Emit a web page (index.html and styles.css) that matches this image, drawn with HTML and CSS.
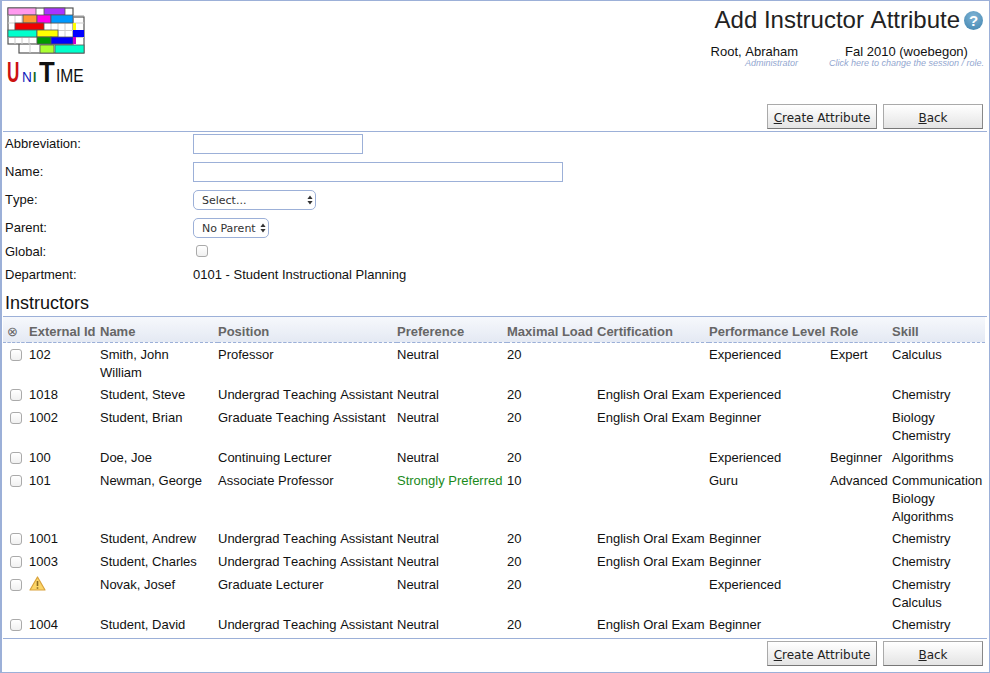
FILE: index.html
```html
<!DOCTYPE html>
<html lang="en">
<head>
    <meta charset="UTF-8">
    <title>Add Instructor Attribute</title>
    <link rel="stylesheet" href="styles.css">
</head>
<body>
    <div class="page">
        <div class="header">
            <div class="logo">
                <svg width="80" height="49" viewBox="0 -1 80 49">
                    <rect x="12" y="9" width="65" height="36" fill="#fff" stroke="#555" stroke-width="1.2"/>
                    <rect x="1" y="0" width="65" height="36" fill="#fff" stroke="#555" stroke-width="1.2"/>
                    <path d="M1 7.5H77M1 15H77M1 22.5H77M1 29.5H77M8 7V36M15 7V36M22 7V36M30 7V36M44 7V36M51 7V36M58 7V36M66 7V45M23 36V45M33 36V45" stroke="#ccc" stroke-width="1" fill="none"/>
                    <rect x="1" y="0" width="28" height="7" fill="#ff99ee" stroke="#555" stroke-width=".8"/>
                    <rect x="37" y="0" width="21" height="7" fill="#aa33ff" stroke="#555" stroke-width=".8"/>
                    <rect x="16" y="7" width="14" height="8" fill="#ff9933" stroke="#555" stroke-width=".8"/>
                    <rect x="30" y="7" width="14" height="8" fill="#ff00ee" stroke="#555" stroke-width=".8"/>
                    <rect x="44" y="7" width="22" height="8" fill="#0099ff" stroke="#555" stroke-width=".8"/>
                    <rect x="8" y="15" width="29" height="7" fill="#ee0000" stroke="#555" stroke-width=".8"/>
                    <rect x="66" y="15" width="3" height="7" fill="#ffff00"/>
                    <rect x="1" y="22" width="29" height="7" fill="#00ffcc" stroke="#555" stroke-width=".8"/>
                    <rect x="30" y="22" width="21" height="7" fill="#ffff00" stroke="#555" stroke-width=".8"/>
                    <rect x="66" y="22" width="11" height="7" fill="#0000ff"/>
                    <rect x="30" y="29" width="14" height="7" fill="#009900" stroke="#555" stroke-width=".8"/>
                    <rect x="44" y="29" width="22" height="7" fill="#0000ff" stroke="#555" stroke-width=".8"/>
                    <rect x="66" y="29" width="3" height="7" fill="#cc00cc"/>
                    <rect x="33" y="37" width="14" height="8" fill="#aaff33" stroke="#555" stroke-width=".8"/>
                    <rect x="48" y="37" width="29" height="8" fill="#00ffcc" stroke="#555" stroke-width=".8"/>
                </svg>
                <svg class="logo-text" width="80" height="38" viewBox="0 0 80 38">
                    <svg x="0" width="13" height="38" viewBox="0 0 22 38" preserveAspectRatio="none"><text class="u" y="30">U</text></svg>
                    <svg x="15" width="10" height="38" viewBox="0 0 11 38" preserveAspectRatio="none"><text class="n" y="30">N</text></svg>
                    <svg x="26" width="4" height="38" viewBox="0 0 5 38" preserveAspectRatio="none"><text class="i" y="30">I</text></svg>
                    <svg x="32" width="16" height="38" viewBox="0 0 18 38" preserveAspectRatio="none"><text class="t" y="30">T</text></svg>
                    <svg x="49" width="28" height="38" viewBox="0 0 34 38" preserveAspectRatio="none"><text class="ime" y="30">IME</text></svg>
                </svg>
            </div>
            <div class="header-right">
                <div class="title-row">
                    <span class="title">Add Instructor Attribute</span>
                    <span class="help">?</span>
                </div>
                <div class="user-row">
                    <div class="user">
                        <div>Root, Abraham</div>
                        <div class="hint">Administrator</div>
                    </div>
                    <div class="session">
                        <div>Fal 2010 (woebegon)</div>
                        <div class="hint">Click here to change the session / role.</div>
                    </div>
                </div>
            </div>
        </div>

        <div class="buttons top-buttons">
            <button class="btn btn-create"><u>C</u>reate Attribute</button>
            <button class="btn btn-back"><u>B</u>ack</button>
        </div>

        <div class="form">
            <div class="row row-abbv">
                <label>Abbreviation:</label>
                <input type="text" class="input-abbv">
            </div>
            <div class="row row-name">
                <label>Name:</label>
                <input type="text" class="input-name">
            </div>
            <div class="row row-type">
                <label>Type:</label>
                <div class="select-wrap select-type">
                    <select><option>Select...</option></select>
                    <svg class="arrows" width="6" height="10" viewBox="0 0 6 10"><path d="M3 0.5L5.6 4H0.4ZM3 9.5L0.4 6H5.6Z" fill="#333"/></svg>
                </div>
            </div>
            <div class="row row-parent">
                <label>Parent:</label>
                <div class="select-wrap select-parent">
                    <select><option>No Parent</option></select>
                    <svg class="arrows" width="6" height="10" viewBox="0 0 6 10"><path d="M3 0.5L5.6 4H0.4ZM3 9.5L0.4 6H5.6Z" fill="#333"/></svg>
                </div>
            </div>
            <div class="row row-global">
                <label>Global:</label>
                <input type="checkbox" class="check">
            </div>
            <div class="row row-dept">
                <label>Department:</label>
                <span>0101 - Student Instructional Planning</span>
            </div>
        </div>

        <h2 class="section">Instructors</h2>

        <table class="instructors">
            <colgroup>
                <col class="c-check"><col class="c-id"><col class="c-name"><col class="c-pos"><col class="c-pref">
                <col class="c-load"><col class="c-cert"><col class="c-perf"><col class="c-role"><col class="c-skill">
            </colgroup>
            <thead>
                <tr>
                    <th class="collapse">&#8855;</th>
                    <th>External Id</th>
                    <th>Name</th>
                    <th>Position</th>
                    <th>Preference</th>
                    <th>Maximal Load</th>
                    <th>Certification</th>
                    <th>Performance Level</th>
                    <th>Role</th>
                    <th>Skill</th>
                </tr>
            </thead>
            <tbody>
                <tr>
                    <td><input type="checkbox" class="check"></td><td>102</td><td>Smith, John William</td><td>Professor</td><td>Neutral</td><td>20</td><td></td><td>Experienced</td><td>Expert</td><td>Calculus</td>
                </tr>
                <tr>
                    <td><input type="checkbox" class="check"></td><td>1018</td><td>Student, Steve</td><td>Undergrad Teaching Assistant</td><td>Neutral</td><td>20</td><td>English Oral Exam</td><td>Experienced</td><td></td><td>Chemistry</td>
                </tr>
                <tr>
                    <td><input type="checkbox" class="check"></td><td>1002</td><td>Student, Brian</td><td>Graduate Teaching Assistant</td><td>Neutral</td><td>20</td><td>English Oral Exam</td><td>Beginner</td><td></td><td>Biology<br>Chemistry</td>
                </tr>
                <tr>
                    <td><input type="checkbox" class="check"></td><td>100</td><td>Doe, Joe</td><td>Continuing Lecturer</td><td>Neutral</td><td>20</td><td></td><td>Experienced</td><td>Beginner</td><td>Algorithms</td>
                </tr>
                <tr>
                    <td><input type="checkbox" class="check"></td><td>101</td><td>Newman, George</td><td>Associate Professor</td><td class="pref-strong">Strongly Preferred</td><td>10</td><td></td><td>Guru</td><td>Advanced</td><td>Communication<br>Biology<br>Algorithms</td>
                </tr>
                <tr>
                    <td><input type="checkbox" class="check"></td><td>1001</td><td>Student, Andrew</td><td>Undergrad Teaching Assistant</td><td>Neutral</td><td>20</td><td>English Oral Exam</td><td>Beginner</td><td></td><td>Chemistry</td>
                </tr>
                <tr>
                    <td><input type="checkbox" class="check"></td><td>1003</td><td>Student, Charles</td><td>Undergrad Teaching Assistant</td><td>Neutral</td><td>20</td><td>English Oral Exam</td><td>Beginner</td><td></td><td>Chemistry</td>
                </tr>
                <tr>
                    <td><input type="checkbox" class="check"></td>
                    <td><svg class="warn" width="17" height="15" viewBox="0 0 17 15"><path d="M8.5 1L16 14H1Z" fill="#fbd568" stroke="#d9a23c" stroke-width="1.2" stroke-linejoin="round"/><path d="M8.5 5V10M8.5 11.2V12.8" stroke="#8a6a20" stroke-width="1.6"/></svg></td>
                    <td>Novak, Josef</td><td>Graduate Lecturer</td><td>Neutral</td><td>20</td><td></td><td>Experienced</td><td></td><td>Chemistry<br>Calculus</td>
                </tr>
                <tr>
                    <td><input type="checkbox" class="check"></td><td>1004</td><td>Student, David</td><td>Undergrad Teaching Assistant</td><td>Neutral</td><td>20</td><td>English Oral Exam</td><td>Beginner</td><td></td><td>Chemistry</td>
                </tr>
            </tbody>
        </table>

        <div class="buttons bottom-buttons">
            <button class="btn btn-create"><u>C</u>reate Attribute</button>
            <button class="btn btn-back"><u>B</u>ack</button>
        </div>
    </div>
</body>
</html>
```

FILE: styles.css
```css
html, body {
    margin: 0;
    padding: 0;
}
body {
    font-family: "Liberation Sans", Arial, sans-serif;
    font-size: 13px;
    font-kerning: none;
    color: #111;
    background-color: #fff;
}
.page {
    box-sizing: border-box;
    height: 673px;
    border: 1px solid #9cb0d8;
    border-left-width: 2px;
    padding: 0 2px 0 1px;
    overflow: hidden;
}

/* header */
.header {
    display: flex;
    justify-content: space-between;
    height: 103px;
}
.logo {
    padding: 6px 0 0 4px;
    width: 90px;
}
.logo svg {
    display: block;
}
.logo-text {
    margin-top: -4px;
}
.logo-text text {
    font-family: "Liberation Sans", sans-serif;
}
.logo-text .u {
    fill: #cc1111;
    font-size: 29px;
    font-weight: bold;
}
.logo-text .n {
    fill: #1122bb;
    font-size: 15px;
}
.logo-text .i {
    fill: #116622;
    font-size: 15px;
    font-weight: bold;
}
.logo-text .t {
    fill: #111;
    font-size: 29px;
    font-weight: bold;
}
.logo-text .ime {
    fill: #111;
    font-size: 19px;
}
.header-right {
    display: flex;
    flex-direction: column;
    align-items: flex-end;
}
.title-row {
    display: flex;
    align-items: center;
    height: 38px;
    gap: 4px;
    padding-right: 4px;
}
.title {
    font-size: 24px;
    color: #222;
}
.help {
    width: 19px;
    height: 19px;
    border-radius: 50%;
    background: radial-gradient(circle at 50% 30%, #7fb4d6, #3f83ad);
    color: #fff;
    font-size: 15px;
    font-weight: bold;
    line-height: 19px;
    text-align: center;
}
.user-row {
    display: flex;
    margin-top: 5px;
    line-height: 15px;
}
.user {
    text-align: right;
    width: 120px;
}
.session {
    text-align: center;
    width: 155px;
    margin-left: 31px;
    margin-right: 3px;
}
.hint {
    font-size: 9px;
    font-style: italic;
    color: #93a7d0;
    line-height: 9px;
    white-space: nowrap;
}

/* buttons */
.buttons {
    display: flex;
    justify-content: flex-end;
    gap: 6px;
    padding-right: 4px;
}
.top-buttons {
    height: 27px;
    border-bottom: 1px solid #9cb0d8;
}
.bottom-buttons {
    margin-top: 2px;
    padding-top: 2px;
    border-top: 1px solid #9cb0d8;
}
.btn {
    height: 25px;
    padding: 2px 0 0 0;
    border: 1px solid #aaa;
    border-right-color: #888;
    border-bottom-color: #777;
    background: linear-gradient(#ffffff, #e4e4e4);
    font-family: "DejaVu Sans", sans-serif;
    font-size: 12px;
    color: #222;
}
.btn-create {
    width: 110px;
}
.btn-back {
    width: 100px;
}

/* form */
.form {
    padding-left: 2px;
}
.row {
    display: flex;
    align-items: center;
}
.row label {
    width: 188px;
    flex-shrink: 0;
}
.row-abbv label, .row-name label, .row-type label, .row-parent label {
    padding-bottom: 2px;
}
.row-abbv {
    height: 24px;
}
.row-name {
    height: 28px;
    margin-top: 2px;
}
.row-type {
    height: 28px;
}
.row-parent {
    height: 28px;
}
.row-global {
    height: 18px;
}
.row-dept {
    height: 28px;
}
input[type="text"] {
    box-sizing: border-box;
    height: 20px;
    border: 1px solid #9cb0d8;
    padding: 0 4px;
    margin: 0;
}
.input-abbv {
    width: 170px;
}
.input-name {
    width: 370px;
}
.check {
    appearance: none;
    box-sizing: border-box;
    width: 12px;
    height: 12px;
    margin: 0;
    border: 1px solid #aaa;
    border-radius: 3px;
    background: linear-gradient(#fff, #f0f0f0);
    display: block;
}
.row .check {
    margin-left: 3px;
}
.select-wrap {
    position: relative;
    height: 20px;
}
.select-wrap select {
    appearance: none;
    box-sizing: border-box;
    height: 20px;
    width: 100%;
    display: block;
    border: 1px solid #9cb0d8;
    border-radius: 5px;
    background-color: #fff;
    padding: 0 0 0 8px;
    font-family: "DejaVu Sans", sans-serif;
    font-size: 11px;
    color: #333;
}
.select-type {
    width: 123px;
}
.select-parent {
    width: 76px;
}
.arrows {
    position: absolute;
    right: 3px;
    top: 5px;
}

/* instructors */
.section {
    font-size: 18px;
    font-weight: normal;
    margin: 0;
    padding: 1px 0 0 2px;
    height: 29px;
    line-height: 29px;
    box-sizing: border-box;
    border-bottom: 1px solid #9cb0d8;
    color: #111;
    overflow: hidden;
}
.instructors {
    width: 982px;
    table-layout: fixed;
    border-collapse: collapse;
}
.c-check { width: 26px; }
.c-id { width: 71px; }
.c-name { width: 118px; }
.c-pos { width: 179px; }
.c-pref { width: 110px; }
.c-load { width: 90px; }
.c-cert { width: 112px; }
.c-perf { width: 121px; }
.c-role { width: 62px; }
.c-skill { width: 93px; }
.instructors th {
    height: 21px;
    padding: 4px 0 0 0;
    text-align: left;
    font-size: 13px;
    color: #666;
    white-space: nowrap;
    background: linear-gradient(#f6f8fc, #e4e9f3);
    border-bottom: 1px dashed #9cb0d8;
}
.instructors th.collapse {
    font-weight: normal;
    padding-left: 4px;
}
.instructors tbody tr {
    height: 23px;
}
.instructors td {
    padding: 3px 0 1px 0;
    line-height: 18px;
    vertical-align: top;
    white-space: normal;
}
.instructors td:nth-child(3) {
    padding-right: 8px;
}
.instructors td:nth-child(n+4) {
    white-space: nowrap;
}
.instructors td .check {
    margin: 3px 0 0 7px;
}
.warn {
    display: block;
    margin-top: 0;
}
.pref-strong {
    color: #1a8a1a;
}
```
